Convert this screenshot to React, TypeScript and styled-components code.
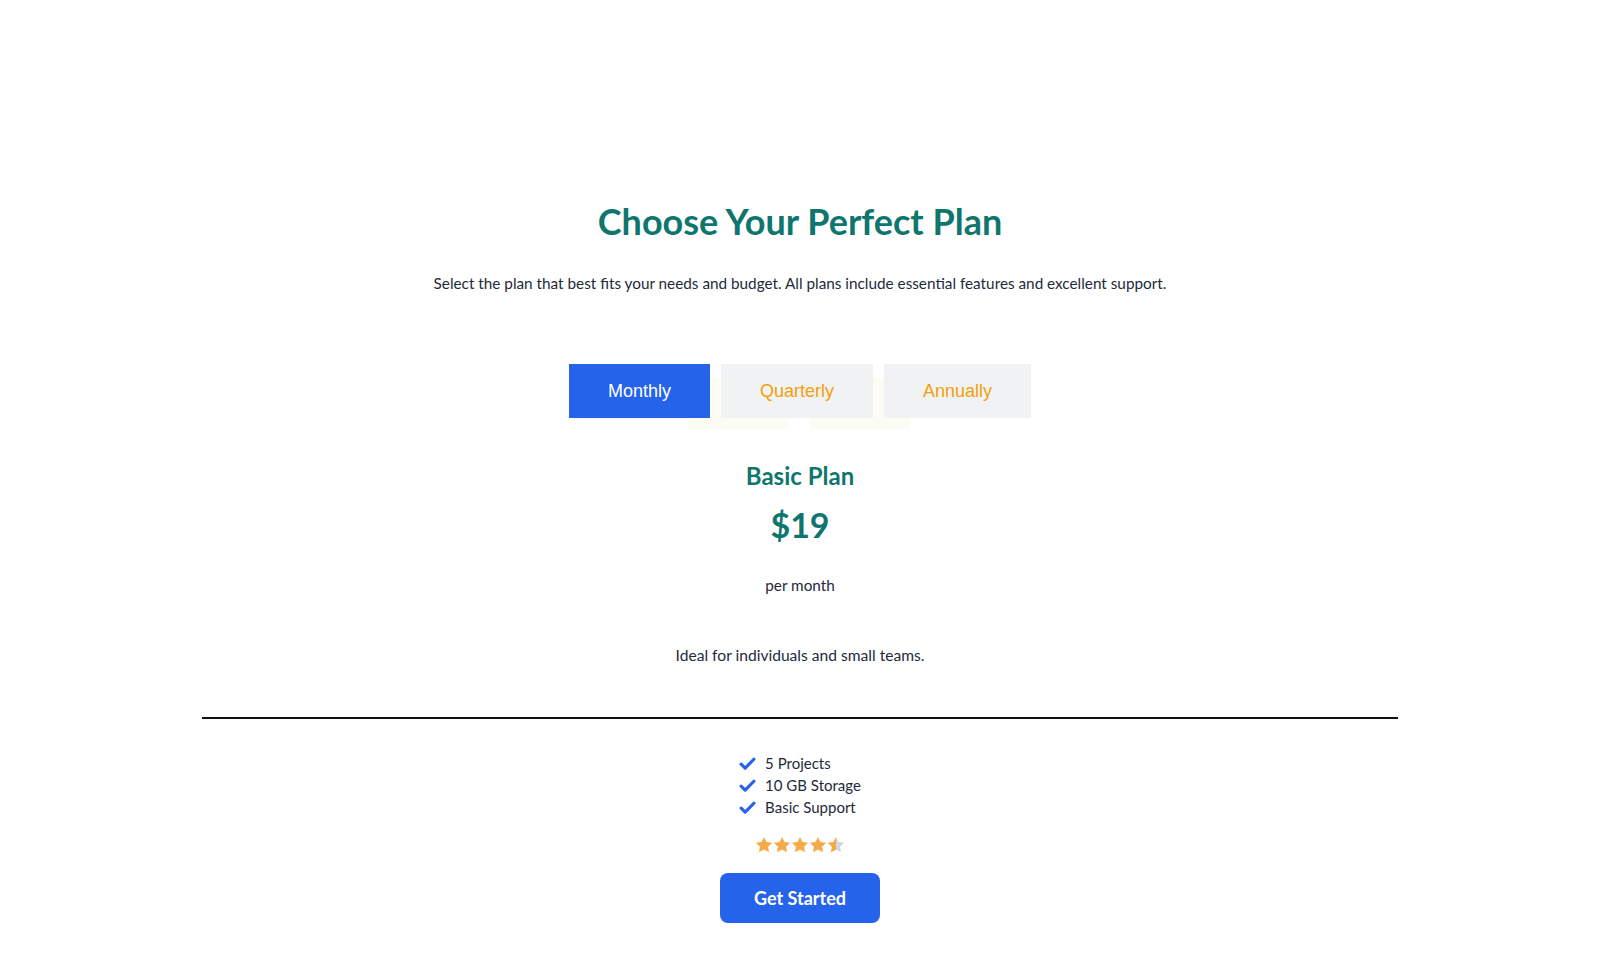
import React, { useState } from 'react';
import styled, { createGlobalStyle } from 'styled-components';

// styles
const GlobalStyle = createGlobalStyle`
	html, body {
		margin: 0;
		padding: 0;
		background: #ffffff;
	}

	body {
		font-family: Lato, 'Noto Sans', sans-serif;
		color: #1e2a3b;
	}
`;

const Page = styled.main`
	max-width: 1196px;
	margin: 0 auto;
	padding: 200px 0 60px;
	flex-flow: column;
	align-items: center;
	display: flex;
`;

const Title = styled.h1`
	color: #0f766e;
	margin: 0;
	font-size: 36px;
	line-height: 43px;
	font-weight: 700;
	text-align: center;
`;

const Subtitle = styled.p`
	margin: 28px 0 0;
	font-size: 15.3px;
	line-height: 24px;
	text-align: center;
`;

const TabRow = styled.div`
	position: relative;
	margin-top: 69px;
	gap: 11px;
	display: flex;
`;

const TabGhost = styled.span<{ $left: number }>`
	position: absolute;
	left: ${(p) => p.$left}px;
	top: 14px;
	width: 100px;
	height: 51px;
	background: #fdfcf4;
	z-index: 0;
`;

const Tab = styled.button<{ $active: boolean }>`
	position: relative;
	z-index: 1;
	height: 54px;
	padding: 0 39px;
	border: 0;
	border-radius: 0;
	cursor: pointer;
	font-family: 'Liberation Sans', Arial, sans-serif;
	font-size: 18px;
	background: ${(p) => (p.$active ? '#2563eb' : '#f1f2f4')};
	color: ${(p) => (p.$active ? '#ffffff' : '#f59e0b')};
`;

const PlanName = styled.h2`
	margin: 43px 0 0;
	color: #0f766e;
	font-size: 24px;
	line-height: 30px;
	font-weight: 700;
`;

const PlanPrice = styled.div`
	margin-top: 12px;
	color: #0f766e;
	font-size: 34px;
	line-height: 44px;
	font-weight: 700;
`;

const PlanPeriod = styled.div`
	margin-top: 26px;
	font-size: 15.3px;
	line-height: 24px;
`;

const PlanDescription = styled.p`
	margin: 46px 0 0;
	font-size: 15.6px;
	line-height: 24px;
`;

const Divider = styled.hr`
	align-self: stretch;
	margin: 50px 0 0;
	border: 0;
	border-top: 2px solid #111111;
`;

const FeatureList = styled.ul`
	list-style: none;
	margin: 33px 0 0;
	padding: 0;
`;

const FeatureItem = styled.li`
	height: 22px;
	gap: 9px;
	align-items: center;
	font-size: 15px;
	display: flex;

	& > svg {
		width: 17px;
		height: 17px;
		flex: 0 0 auto;
	}
`;

const Stars = styled.div`
	margin-top: 18px;
	gap: 0;
	display: flex;

	& > svg {
		width: 18px;
		height: 18px;
	}
`;

const Cta = styled.button`
	margin-top: 19px;
	width: 160px;
	height: 50px;
	border: 0;
	border-radius: 8px;
	background: #2563eb;
	color: #ffffff;
	font-family: Lato, 'Noto Sans', sans-serif;
	font-size: 18px;
	font-weight: 700;
	cursor: pointer;
`;

const STAR = 'M12 1.2l3.3 6.8 7.5 1-5.4 5.2 1.3 7.4L12 18.1l-6.7 3.5 1.3-7.4L1.2 9l7.5-1z';

const Check = () => (
	<svg viewBox='0 0 16 16'>
		<path d='M2 8.6l3.8 3.7L14 4' fill='none' stroke='#2563eb' strokeWidth='3' strokeLinecap='round' strokeLinejoin='round' />
	</svg>
);

const Star = ({ half }: { half?: boolean }) => (
	<svg viewBox='0 0 24 24'>
		{half ? (
			<>
				<defs>
					<clipPath id='half-left'>
						<rect x='0' y='0' width='12' height='24' />
					</clipPath>
				</defs>
				<path d={STAR} fill='#cfd8e1' />
				<path d={STAR} fill='#f4ab47' clipPath='url(#half-left)' />
			</>
		) : (
			<path d={STAR} fill='#f4ab47' />
		)}
	</svg>
);

const periods = [
	{ key: 'monthly', label: 'Monthly', price: 19, unit: 'per month' },
	{ key: 'quarterly', label: 'Quarterly', price: 51, unit: 'per quarter' },
	{ key: 'annually', label: 'Annually', price: 190, unit: 'per year' },
];

const features = ['5 Projects', '10 GB Storage', 'Basic Support'];

// components
export default function App() {
	const [period, setPeriod] = useState('monthly');
	const current = periods.find((p) => p.key === period) ?? periods[0];

	return (
		<>
			<GlobalStyle />

			<Page>
				<Title>Choose Your Perfect Plan</Title>
				<Subtitle>Select the plan that best fits your needs and budget. All plans include essential features and excellent support.</Subtitle>

				<TabRow>
					<TabGhost $left={119} />
					<TabGhost $left={241} />
					{periods.map((p) => (
						<Tab key={p.key} $active={p.key === period} onClick={() => setPeriod(p.key)}>
							{p.label}
						</Tab>
					))}
				</TabRow>

				<PlanName>Basic Plan</PlanName>
				<PlanPrice>${current.price}</PlanPrice>
				<PlanPeriod>{current.unit}</PlanPeriod>
				<PlanDescription>Ideal for individuals and small teams.</PlanDescription>

				<Divider />

				<FeatureList>
					{features.map((f) => (
						<FeatureItem key={f}>
							<Check />
							{f}
						</FeatureItem>
					))}
				</FeatureList>

				<Stars>
					<Star />
					<Star />
					<Star />
					<Star />
					<Star half />
				</Stars>

				<Cta>Get Started</Cta>
			</Page>
		</>
	);
}
